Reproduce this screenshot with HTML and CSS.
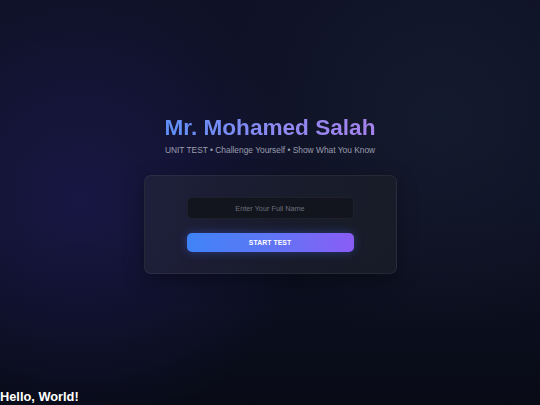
FILE: index.html
```html
<!DOCTYPE html>
<html lang="en">
<head>
    <meta charset="UTF-8">
    <meta name="viewport" content="width=device-width, initial-scale=1.0">
    <title>Unit Test - Mr. Mohamed Salah</title>
    <link rel="stylesheet" href="styles.css">
</head>
<body>

    <div class="pagina">
        <div class="cabecalho">
            <h1 class="titulo">Mr. Mohamed Salah</h1>
            <p class="subtitulo">UNIT TEST &bull; Challenge Yourself &bull; Show What You Know</p>
        </div>

        <div class="cartao">
            <input type="text" id="nome" class="campo-nome" placeholder="Enter Your Full Name">
            <button id="iniciar" class="botao-iniciar">START TEST</button>
        </div>
    </div>

    <div class="ola">Hello, World!</div>

</body>
</html>
```

FILE: styles.css
```css
body {
    font-family: "Liberation Sans", Arial, sans-serif;
    margin: 0;
    padding: 0;
    min-height: 100vh;
    color: #fff;
    background-color: #0d1020;
    background-image:
        radial-gradient(circle at 80px 200px, rgba(34, 28, 100, 0.5) 0, rgba(34, 28, 100, 0) 230px),
        radial-gradient(circle at 440px 120px, rgba(30, 41, 59, 0.35) 0, rgba(30, 41, 59, 0) 220px),
        linear-gradient(180deg, #0f1226 0%, #0e1124 55%, #080b16 100%);
    overflow: hidden;
}

.pagina {
    height: calc(100vh - 16px);
    display: flex;
    flex-direction: column;
    align-items: center;
    justify-content: center;
}

.cabecalho {
    text-align: center;
    margin-bottom: 20px;
}

.titulo {
    margin: 0 0 4px;
    font-size: 22.6px;
    font-weight: bold;
    line-height: normal;
    background: linear-gradient(90deg, #5f8ff7 0%, #8f8af2 55%, #a682ec 100%);
    -webkit-background-clip: text;
    background-clip: text;
    color: transparent;
}

.subtitulo {
    margin: 0;
    font-size: 8.4px;
    color: #9a9eae;
}

.cartao {
    width: 253px;
    box-sizing: border-box;
    padding: 21px 42px 21px;
    display: flex;
    flex-direction: column;
    gap: 14px;
    background: linear-gradient(100deg, rgba(34, 34, 60, 0.8) 0%, rgba(28, 31, 46, 0.8) 55%, rgba(26, 30, 40, 0.8) 100%);
    border: 1px solid rgba(255, 255, 255, 0.06);
    border-radius: 7px;
    box-shadow: 0 6px 20px rgba(0, 0, 0, 0.35);
}

.campo-nome {
    height: 22px;
    box-sizing: border-box;
    width: 100%;
    padding: 0 8px;
    background-color: #13151e;
    border: 1px solid rgba(255, 255, 255, 0.05);
    border-radius: 5px;
    font-family: inherit;
    font-size: 7.3px;
    color: #ddd;
    text-align: center;
    outline: none;
}

.campo-nome::placeholder {
    color: #6c6f7c;
}

.botao-iniciar {
    height: 19px;
    width: 100%;
    border: none;
    border-radius: 5px;
    background: linear-gradient(90deg, #3f83f7 0%, #5f76f5 50%, #8a5cf6 100%);
    box-shadow: 0 0 10px rgba(70, 110, 246, 0.4);
    color: #fff;
    font-family: inherit;
    font-size: 6.8px;
    font-weight: bold;
    letter-spacing: 0.1px;
    cursor: pointer;
}

.ola {
    font-size: 12.8px;
    font-weight: bold;
    color: #fff;
}
```
